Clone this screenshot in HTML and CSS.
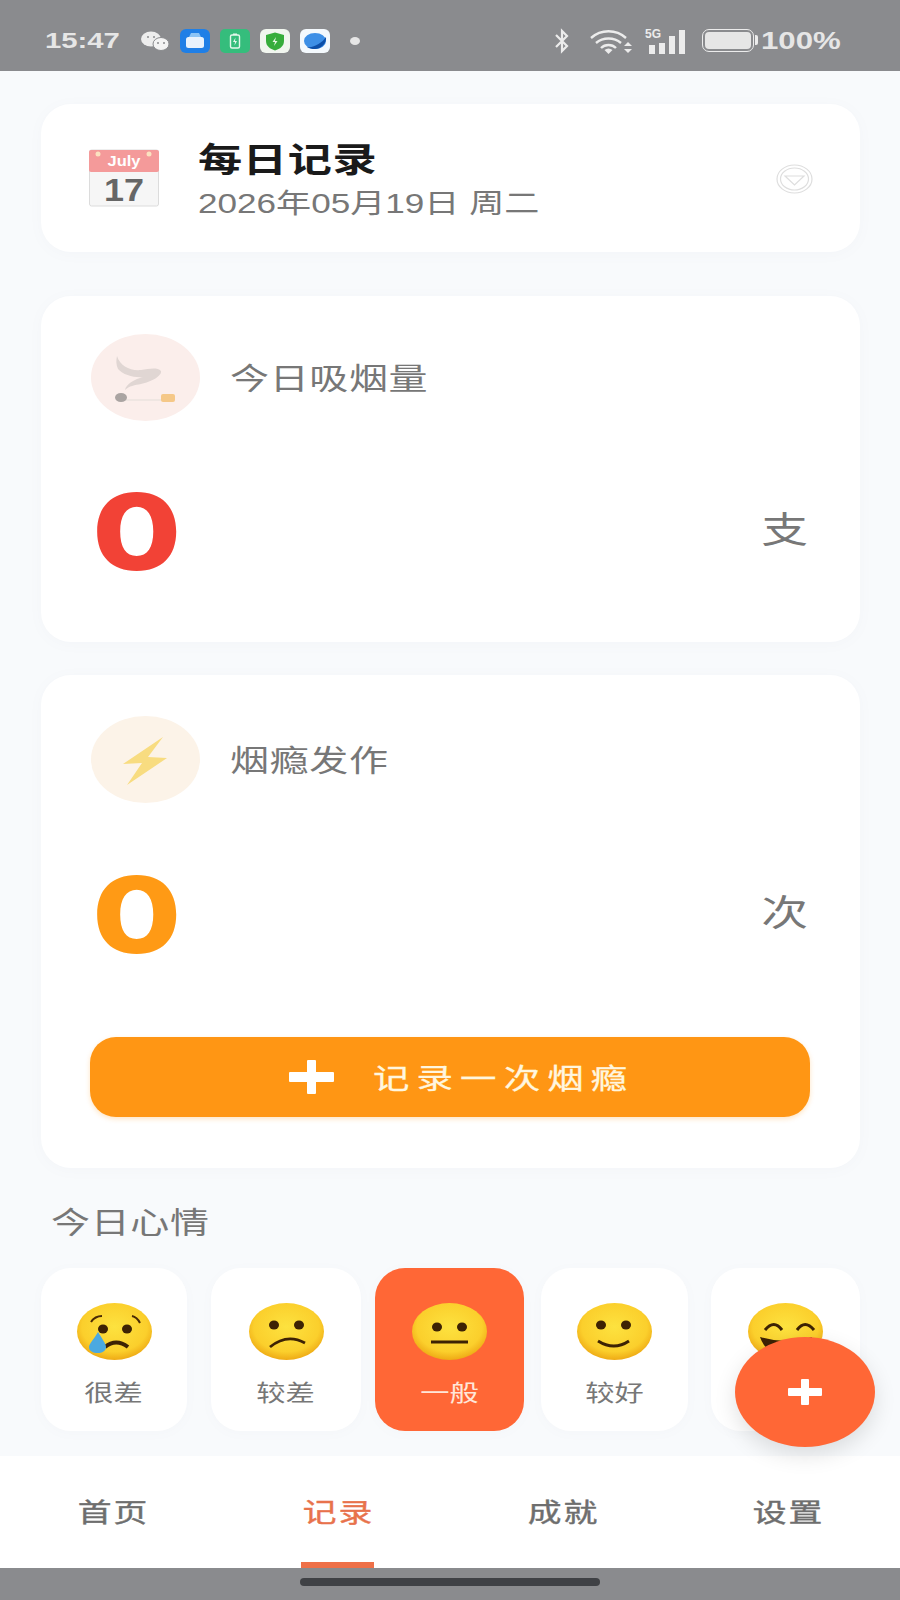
FILE: index.html
```html
<!DOCTYPE html>
<html lang="zh-CN">
<head>
    <meta charset="UTF-8">
    <meta name="viewport" content="width=device-width, initial-scale=1.0">
    <title>每日记录</title>
    <link rel="stylesheet" href="styles.css">
</head>
<body>
    <div class="status-bar">
        <span class="wide status-time">15:47</span>
        <div class="status-apps">
            <svg class="app-wechat" viewBox="0 0 28 20">
                <ellipse cx="10" cy="8" rx="10" ry="7.5" fill="#ededed"/>
                <ellipse cx="20" cy="13" rx="8" ry="6.5" fill="#f3f3f3" stroke="#8a8b8e"/>
                <circle cx="17" cy="12" r="1" fill="#8a8b8e"/>
                <circle cx="23" cy="12" r="1" fill="#8a8b8e"/>
                <circle cx="7" cy="6" r="1" fill="#8a8b8e"/>
                <circle cx="13" cy="6" r="1" fill="#8a8b8e"/>
            </svg>
            <svg class="app-tile" viewBox="0 0 30 24">
                <rect width="30" height="24" rx="6" fill="#1f7fe6"/>
                <rect x="6" y="8" width="18" height="11" rx="2.5" fill="#e8f2fc"/>
                <path d="M9 8 L11 4 H19 L21 8 Z" fill="#8cc4f5"/>
            </svg>
            <svg class="app-tile" viewBox="0 0 30 24">
                <rect width="30" height="24" rx="5" fill="#35bd7c"/>
                <rect x="10.5" y="6" width="9" height="13" rx="1.5" fill="none" stroke="#e4f7ec" stroke-width="1.4"/>
                <rect x="13" y="4.5" width="4" height="1.5" fill="#e4f7ec"/>
                <path d="M15.5 8.5 L13 13 H15 L14.5 16.5 L17 12 H15 Z" fill="#e4f7ec"/>
            </svg>
            <svg class="app-tile" viewBox="0 0 30 24">
                <rect width="30" height="24" rx="6" fill="#f1f6ef"/>
                <path d="M15 3.5 L24 6 V12 C24 17 20 20 15 21.5 C10 20 6 17 6 12 V6 Z" fill="#37ad3c"/>
                <path d="M16 8 L12.5 13 H15 L14 17 L17.5 12 H15 Z" fill="#e6f7e4"/>
            </svg>
            <svg class="app-tile" viewBox="0 0 30 24">
                <rect width="30" height="24" rx="6" fill="#f4f9fd"/>
                <ellipse cx="15" cy="12" rx="11" ry="8" fill="#3d8fe6"/>
                <path d="M7 18 C14 19 22 14 26 8 C27 14 21 20 15 20 C12 20 9 19.5 7 18 Z" fill="#0d4fa8"/>
            </svg>
            <span class="status-dot"></span>
        </div>
        <div class="status-right">
            <svg class="sys-bluetooth" viewBox="0 0 18 26">
                <path d="M3 7 L14 18 L9 23 V3 L14 8 L3 19" fill="none" stroke="#ececec" stroke-width="2.2"/>
            </svg>
            <svg class="sys-wifi" viewBox="0 0 43 26">
                <path d="M1 10 C11 1 26 1 36 10 M6 15 C13 9 24 9 31 15 M11 20 C15 16 22 16 26 20" fill="none" stroke="#ececec" stroke-width="2.4"/>
                <path d="M18.500 26 L14.500 22 C17 20 20 20 22.500 22 Z" fill="#ececec"/>
                <path d="M38 14 L42 18 H34 Z M34 21 H42 L38 25 Z" fill="#ececec"/>
            </svg>
            <div class="sys-signal">
                <span class="sys-5g">5G</span>
                <span class="bar bar-1"></span>
                <span class="bar bar-2"></span>
                <span class="bar bar-3"></span>
                <span class="bar bar-4"></span>
            </div>
            <div class="sys-battery"><span class="battery-fill"></span></div>
            <span class="wide status-percent">100%</span>
        </div>
    </div>

    <main class="content">
        <section class="card date-card">
            <svg class="calendar-icon" viewBox="0 0 70 58">
                <rect x="0.500" y="1" width="69" height="56" rx="2" fill="#f6f6f6" stroke="#dcdcdc"/>
                <rect x="0" y="1" width="70" height="22" rx="2" fill="#f49a9a"/>
                <circle cx="9" cy="5" r="2.500" fill="#fbe2c0"/>
                <circle cx="60" cy="5" r="2.500" fill="#fbe2c0"/>
                <text class="cal-month" x="35" y="17" textLength="33" lengthAdjust="spacingAndGlyphs">July</text>
                <text class="cal-day" x="35" y="52" textLength="40" lengthAdjust="spacingAndGlyphs">17</text>
            </svg>
            <div class="date-text">
                <div class="wide date-title">每日记录</div>
                <div class="wide date-sub">2026年05月19日 周二</div>
            </div>
            <svg class="date-toggle" viewBox="0 0 37 30">
                <ellipse cx="18.500" cy="15" rx="17.500" ry="14" fill="none" stroke="#dedede" stroke-width="1.2"/>
                <ellipse cx="18.500" cy="15" rx="14" ry="11" fill="none" stroke="#dedede" stroke-width="1.2"/>
                <path d="M9 12 H28 L18.500 21 Z" fill="none" stroke="#dedede" stroke-width="1.2"/>
            </svg>
        </section>

        <section class="card stat-card smoke-card">
            <div class="stat-head">
                <div class="stat-icon icon-smoke">
                    <svg viewBox="0 0 109 87">
                        <path d="M26 22 C29 32 39 37 50 36 C58 35 66 33 70 37 C71 42 60 48 50 50 C44 51 38 52 34 56 C35 50 44 45 52 43 C44 44 32 41 27 35 C25 31 25 26 26 22 Z" fill="#e0d6d3"/>
                        <rect x="33" y="65" width="38" height="2" fill="#efe6e2"/>
                        <ellipse cx="30" cy="63.500" rx="6" ry="4.500" fill="#aaa4a2"/>
                        <rect x="70" y="60" width="14" height="8" rx="2" fill="#f5c888"/>
                    </svg>
                </div>
                <span class="wide stat-label">今日吸烟量</span>
            </div>
            <div class="stat-value">
                <span class="wide stat-number number-red">0</span>
                <span class="wide stat-unit">支</span>
            </div>
        </section>

        <section class="card stat-card craving-card">
            <div class="stat-head">
                <div class="stat-icon icon-craving">
                    <svg viewBox="0 0 109 87">
                        <path d="M72 21 L32 48 L51 47 L36 69 L76 42 L57 41 Z" fill="#f8dc80"/>
                    </svg>
                </div>
                <span class="wide stat-label">烟瘾发作</span>
            </div>
            <div class="stat-value">
                <span class="wide stat-number number-orange">0</span>
                <span class="wide stat-unit">次</span>
            </div>
            <button class="record-btn" type="button">
                <svg class="record-plus" viewBox="0 0 45 34">
                    <path d="M18 1 Q18 0 19 0 H26 Q27 0 27 1 V12 H44 Q45 12 45 13 V21 Q45 22 44 22 H27 V33 Q27 34 26 34 H19 Q18 34 18 33 V22 H1 Q0 22 0 21 V13 Q0 12 1 12 H18 Z" fill="#fff"/>
                </svg>
                <span class="wide record-text">记录一次烟瘾</span>
            </button>
        </section>

        <div class="wide section-label">今日心情</div>

        <div class="mood-row">
            <div class="mood">
                <svg class="mood-face" viewBox="0 0 75 57">
                    <defs>
                        <radialGradient id="face" cx="50%" cy="42%" r="58%">
                            <stop offset="0%" stop-color="#fde23f"/>
                            <stop offset="75%" stop-color="#fbcf2c"/>
                            <stop offset="100%" stop-color="#eeaa15"/>
                        </radialGradient>
                    </defs>
                    <ellipse cx="37.500" cy="28.500" rx="37.500" ry="28.500" fill="url(#face)"/>
                    <path d="M14 19 Q18 13 25 13 M55 13 Q60 14 63 20" fill="none" stroke="#4a2a05" stroke-width="2"/>
                    <ellipse cx="26" cy="26" rx="5" ry="4.500" fill="#3d2204"/>
                    <ellipse cx="50" cy="26" rx="5" ry="4.500" fill="#3d2204"/>
                    <path d="M28 44 Q39 35 51 44" fill="none" stroke="#3d2204" stroke-width="4"/>
                    <path d="M21 29 C26 37 29 41 29 44 C29 48 25 50 21 50 C16 50 12 48 12 44 C12 41 17 36 21 29 Z" fill="#4ba9e0"/>
                </svg>
                <span class="wide mood-name">很差</span>
            </div>
            <div class="mood">
                <svg class="mood-face" viewBox="0 0 75 57">
                    <ellipse cx="37.500" cy="28.500" rx="37.500" ry="28.500" fill="url(#face)"/>
                    <ellipse cx="25" cy="22" rx="5" ry="4.500" fill="#3d2204"/>
                    <ellipse cx="50" cy="22" rx="5" ry="4.500" fill="#3d2204"/>
                    <path d="M21 44 Q38 30 56 40" fill="none" stroke="#3d2204" stroke-width="2.800"/>
                </svg>
                <span class="wide mood-name">较差</span>
            </div>
            <div class="mood mood-active">
                <svg class="mood-face" viewBox="0 0 75 57">
                    <ellipse cx="37.500" cy="28.500" rx="37.500" ry="28.500" fill="url(#face)"/>
                    <ellipse cx="25" cy="24" rx="5" ry="4.500" fill="#3d2204"/>
                    <ellipse cx="50" cy="24" rx="5" ry="4.500" fill="#3d2204"/>
                    <path d="M19 39 H56" fill="none" stroke="#3d2204" stroke-width="3"/>
                </svg>
                <span class="wide mood-name">一般</span>
            </div>
            <div class="mood">
                <svg class="mood-face" viewBox="0 0 75 57">
                    <ellipse cx="37.500" cy="28.500" rx="37.500" ry="28.500" fill="url(#face)"/>
                    <ellipse cx="24" cy="22" rx="5" ry="4.500" fill="#3d2204"/>
                    <ellipse cx="49" cy="22" rx="5" ry="4.500" fill="#3d2204"/>
                    <path d="M21 38 Q37 48 52 38" fill="none" stroke="#3d2204" stroke-width="3"/>
                </svg>
                <span class="wide mood-name">较好</span>
            </div>
            <div class="mood">
                <svg class="mood-face" viewBox="0 0 75 57">
                    <ellipse cx="37.500" cy="28.500" rx="37.500" ry="28.500" fill="url(#face)"/>
                    <path d="M17 27 Q26 16 34 27 M49 27 Q57 16 66 27" fill="none" stroke="#3d2204" stroke-width="3"/>
                    <path d="M12 34 Q38 42 64 34 Q58 52 38 52 Q18 52 12 34 Z" fill="#3d2204"/>
                </svg>
                <span class="wide mood-name">很好</span>
            </div>
        </div>
    </main>

    <nav class="tab-bar">
        <a class="tab"><span class="wide tab-text">首页</span></a>
        <a class="tab tab-active"><span class="wide tab-text">记录</span></a>
        <a class="tab"><span class="wide tab-text">成就</span></a>
        <a class="tab"><span class="wide tab-text">设置</span></a>
    </nav>

    <div class="home-bar"><span class="home-indicator"></span></div>

    <button class="fab" type="button">
        <svg viewBox="0 0 34 26"><path d="M13 1 Q13 0 14 0 H20 Q21 0 21 1 V9 H33 Q34 9 34 10 V16 Q34 17 33 17 H21 V25 Q21 26 20 26 H14 Q13 26 13 25 V17 H1 Q0 17 0 16 V10 Q0 9 1 9 H13 Z" fill="#fff"/></svg>
    </button>
</body>
</html>
```

FILE: styles.css
```css
* {
    box-sizing: border-box;
}
body {
    position: relative;
    display: flex;
    flex-direction: column;
    width: 900px;
    height: 1600px;
    margin: 0;
    overflow: hidden;
    background-color: #f8fafc;
    font-family: 'Liberation Sans', 'Noto Sans CJK SC', sans-serif;
    color: #777;
}
/* the whole screenshot is stretched sideways, so the text is too */
.wide {
    display: inline-block;
    width: fit-content;
    transform: scaleX(1.3);
    transform-origin: left center;
    white-space: nowrap;
}

.status-bar {
    display: flex;
    align-items: center;
    flex: none;
    height: 71px;
    padding: 10px 62px 0 45px;
    background-color: #8a8b8e;
    color: #e6e6e6;
}
.status-time {
    width: 96px;
    font-size: 22.5px;
    font-weight: bold;
}
.status-apps {
    display: flex;
    align-items: center;
    gap: 10px;
}
.app-wechat {
    width: 28px;
    height: 20px;
    margin-right: 1px;
}
.app-tile {
    width: 30px;
    height: 24px;
}
.status-dot {
    width: 10px;
    height: 8px;
    margin-left: 10px;
    border-radius: 50%;
    background-color: #e6e6e6;
}
.status-right {
    display: flex;
    align-items: center;
    margin-left: auto;
}
.sys-bluetooth {
    width: 18px;
    height: 26px;
    margin-right: 19px;
}
.sys-wifi {
    width: 43px;
    height: 26px;
    margin-right: 12px;
}
.sys-signal {
    position: relative;
    display: flex;
    align-items: flex-end;
    gap: 4px;
    width: 42px;
    height: 26px;
    margin-right: 15px;
    padding-left: 4px;
}
.sys-5g {
    position: absolute;
    top: -1px;
    left: 0;
    font-size: 12px;
    font-weight: bold;
    color: #ececec;
}
.bar {
    width: 6px;
    background-color: #ececec;
}
.bar-1 { height: 9px; }
.bar-2 { height: 11px; }
.bar-3 { height: 18px; }
.bar-4 { height: 24px; }
.sys-battery {
    position: relative;
    width: 52px;
    height: 23px;
    margin-right: 7px;
    padding: 2px;
    border: 1.5px solid #ececec;
    border-radius: 7px;
}
.sys-battery::after {
    content: "";
    position: absolute;
    top: 5px;
    right: -5px;
    width: 3px;
    height: 10px;
    border-radius: 0 2px 2px 0;
    background-color: #ececec;
}
.battery-fill {
    display: block;
    height: 100%;
    border-radius: 4px;
    background-color: #e6e6e6;
}
.status-percent {
    width: 77px;
    font-size: 24px;
    font-weight: bold;
}

.content {
    flex: 1;
    padding: 33px 40px 0 41px;
}
.card {
    background-color: #fff;
    border-radius: 30px;
    box-shadow: 0 2px 14px rgba(120, 130, 150, 0.04);
}
.date-card {
    display: flex;
    align-items: center;
    height: 148px;
    padding: 0 47px 0 48px;
}
.calendar-icon {
    width: 70px;
    height: 58px;
    margin-right: 39px;
}
.cal-month {
    font-size: 14px;
    font-weight: bold;
    fill: #fff;
    text-anchor: middle;
}
.cal-day {
    font-size: 32px;
    font-weight: bold;
    fill: #666;
    text-anchor: middle;
}
.date-text {
    flex: 1;
}
.date-title {
    display: block;
    font-size: 34px;
    font-weight: bold;
    letter-spacing: 0.5px;
    line-height: 44px;
    padding-top: 3px;
    color: #1a1a1a;
}
.date-sub {
    display: block;
    font-size: 27px;
    line-height: 36px;
    padding-top: 4px;
    color: #777;
}
.date-toggle {
    width: 37px;
    height: 30px;
    margin-top: 2px;
}

.stat-card {
    margin-top: 44px;
    padding: 38px 53px 63px 50px;
}
.craving-card {
    margin-top: 33px;
    padding-top: 41px;
    padding-bottom: 51px;
}
.stat-head {
    display: flex;
    align-items: center;
}
.stat-icon {
    flex: none;
    width: 109px;
    height: 87px;
    margin-right: 30px;
    border-radius: 50%;
}
.stat-icon svg {
    display: block;
    width: 100%;
    height: 100%;
}
.icon-smoke {
    background-color: #fbeeeb;
}
.icon-craving {
    background-color: #fcf3e8;
}
.stat-label {
    margin-top: -3px;
    font-size: 30px;
    letter-spacing: 0.5px;
    color: #777;
}
.stat-value {
    display: flex;
    align-items: center;
    justify-content: space-between;
    height: 90px;
    margin-top: 68px;
}
.craving-card .stat-value {
    margin-top: 69px;
}
.stat-number {
    font-family: 'Inter', sans-serif;
    font-size: 106px;
    font-weight: 800;
    line-height: 90px;
    margin: -5px 0 0 1px;
    transform: scaleX(1.22);
}
.number-red {
    color: #f24236;
}
.number-orange {
    color: #ff9a15;
}
.stat-unit {
    width: 36px;
    margin: -6px -1px 0 0;
    transform-origin: right center;
    font-size: 36px;
    line-height: 40px;
    color: #777;
}
.record-btn {
    display: flex;
    align-items: center;
    justify-content: center;
    width: 720px;
    height: 80px;
    margin: 75px 0 0 -1px;
    padding: 0 0 0 18px;
    border: none;
    border-radius: 26px;
    background-color: #ff9614;
    box-shadow: 0 2px 5px rgba(255, 150, 20, 0.25);
    font-family: inherit;
    cursor: pointer;
}
.record-plus {
    width: 45px;
    height: 34px;
    margin-right: 39px;
}
.record-text {
    width: 257px;
    font-size: 28px;
    letter-spacing: 5.5px;
    text-align: left;
    -webkit-text-stroke: 0.3px currentColor;
    color: #fff6df;
}
.section-label {
    display: block;
    margin: 35px 0 0 10px;
    font-size: 30px;
    letter-spacing: 0.5px;
    line-height: 40px;
    color: #777;
}
.mood-row {
    display: flex;
    margin-top: 25px;
}
.mood {
    display: flex;
    flex-direction: column;
    align-items: center;
    height: 163px;
    padding-top: 35px;
    border-radius: 30px;
    background-color: #fff;
    box-shadow: 0 2px 12px rgba(120, 130, 150, 0.03);
}
.mood:nth-child(1) { width: 146px; }
.mood:nth-child(2) { width: 150px; margin-left: 24px; }
.mood:nth-child(3) { width: 149px; margin-left: 14px; }
.mood:nth-child(4) { width: 147px; margin-left: 17px; }
.mood:nth-child(5) { width: 149px; margin-left: 23px; }
.mood-face {
    width: 75px;
    height: 57px;
    margin-bottom: 19px;
}
.mood-name {
    font-size: 22.5px;
    line-height: 30px;
    transform-origin: center;
    color: #777;
}
.mood-active {
    background-color: #ff6736;
}
.mood-active .mood-name {
    color: #ffe6d8;
}

.tab-bar {
    display: grid;
    grid-template-columns: repeat(4, 1fr);
    flex: none;
    height: 112px;
    background-color: #fff;
}
.tab {
    position: relative;
    display: flex;
    justify-content: center;
    padding-top: 39px;
}
.tab-text {
    margin-left: 2px;
    font-size: 26px;
    letter-spacing: 1.5px;
    line-height: 36px;
    transform-origin: center;
    -webkit-text-stroke: 0.4px currentColor;
    color: #6e6e6e;
}
.tab-active .tab-text {
    color: #e8724c;
}
.tab-active::after {
    content: "";
    position: absolute;
    bottom: 0;
    left: 76px;
    width: 73px;
    height: 6px;
    background-color: #ee7048;
}
.home-bar {
    flex: none;
    height: 32px;
    padding-top: 10px;
    background-color: #8a8b8e;
}
.home-indicator {
    display: block;
    width: 300px;
    height: 8px;
    margin: 0 auto;
    border-radius: 4px;
    background-color: #3f4145;
}
.fab {
    position: absolute;
    top: 1337px;
    left: 735px;
    display: flex;
    align-items: center;
    justify-content: center;
    width: 140px;
    height: 110px;
    padding: 0;
    border: none;
    border-radius: 50%;
    background-color: #ff6736;
    box-shadow: 0 8px 22px rgba(0, 0, 0, 0.12);
    cursor: pointer;
}
.fab svg {
    width: 34px;
    height: 26px;
}
```
